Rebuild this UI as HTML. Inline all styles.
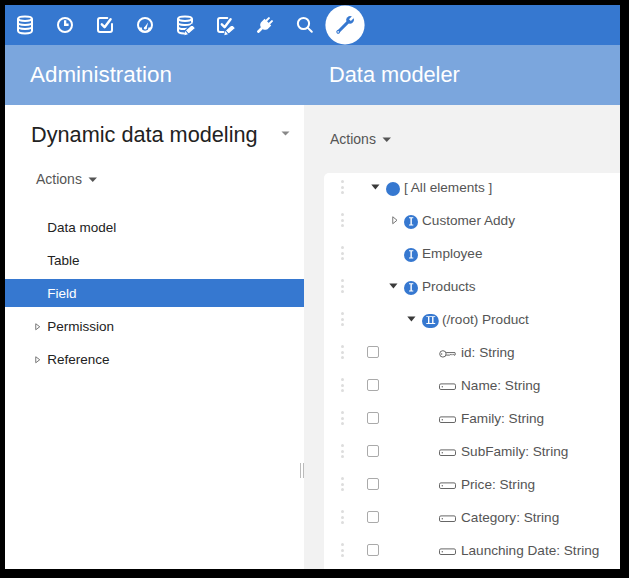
<!DOCTYPE html>
<html><head><meta charset="utf-8">
<style>
html,body{margin:0;padding:0;}
body{width:629px;height:578px;background:#000;position:relative;overflow:hidden;font-family:"Liberation Sans",sans-serif;}
#app{position:absolute;left:5px;top:5px;width:615px;height:564px;background:#fff;overflow:hidden;}
.abs{position:absolute;}
#topbar{position:absolute;left:0;top:0;width:615px;height:40px;background:#3678d0;}
#hdr{position:absolute;left:0;top:40px;width:615px;height:60px;background:#7ba6dd;}
.htxt{position:absolute;color:#fff;font-size:22px;line-height:26px;white-space:nowrap;}
#left{position:absolute;left:0;top:100px;width:299px;height:464px;background:#fff;}
#right{position:absolute;left:299px;top:100px;width:316px;height:464px;background:#f2f2f2;}
#card{position:absolute;left:20px;top:68px;width:320px;height:420px;background:#fff;border-radius:5px;}
.t{position:absolute;white-space:nowrap;font-size:14px;line-height:20px;}
.lt{color:#222;font-size:13.5px;}
.tt{color:#555;font-size:13.6px;}
.dots{position:absolute;width:3px;height:13px;}
.dots i{position:absolute;left:0;width:3px;height:3px;border-radius:50%;background:#ddd;}
.cb{position:absolute;width:10px;height:10px;border:1px solid #aaa;border-radius:2px;background:#fff;}
</style></head>
<body>
<div id="app">
  <div id="topbar">
    <svg class="abs" style="left:0;top:0" width="615" height="40" viewBox="5 5 615 40">
      <g fill="none" stroke="#fff" stroke-width="2" stroke-linecap="round" stroke-linejoin="round">
        <!-- database -->
        <path d="M18,18.8 C18,15.6 32,15.6 32,18.8 V30.8 C32,34.4 18,34.4 18,30.8 Z"/>
        <path d="M18.5,19 C19,21.6 31,21.6 31.5,19"/>
        <path d="M18,22.8 C18,25.6 32,25.6 32,22.8"/>
        <path d="M18,26.8 C18,29.6 32,29.6 32,26.8"/>
        <!-- clock -->
        <circle cx="65" cy="25" r="7"/>
        <!-- checkbox -->
        <path d="M107.3,18 H100 Q98,18 98,20 V30 Q98,32 100,32 H110 Q112,32 112,30 V24"/>
        <path d="M101.8,24.3 L104.6,27.2 L110.6,19.2" stroke-width="2.4"/>
        <!-- gauge -->
        <circle cx="145" cy="25" r="7"/>
        <!-- db edit -->
        <path d="M184,33.5 C180,33.5 178,32.5 178,30.8 V18.8 C178,15.6 192,15.6 192,18.8 V22"/>
        <path d="M178.5,19 C179,21.6 191,21.6 191.5,19"/>
        <path d="M178,22.8 C178,25.6 190,25.6 191.5,23.5"/>
        <path d="M178,26.8 C178,29.2 184,29.4 187,28.8"/>
        <!-- check edit -->
        <path d="M227.3,18 H220 Q218,18 218,20 V30 Q218,32 220,32 H223.5"/>
        <path d="M221.8,24.3 L224.6,27.2 L230.6,19.2" stroke-width="2.4"/>
        <!-- search -->
        <circle cx="303.5" cy="23.5" r="5.6"/>
        <path d="M307.6,27.6 L311.8,31.8"/>
      </g>
      <g fill="#fff">
        <path d="M64,20.3 h2.3 v3.3 h2.3 v2.3 h-4.6 z"/>
        <!-- gauge bottom -->
        <path d="M138.3,27.4 H141.8 A3.3,3.3 0 0 0 148.4,27.4 H151.7 A7,7 0 0 1 138.3,27.4 Z"/>
        <path d="M144.1,27.8 L148.1,22.6 L146.5,28.7 Z"/>
        <circle cx="145.3" cy="28.2" r="1.35"/>
      </g>
      <!-- pencils -->
      <g fill="#fff" stroke="#3678d0" stroke-width="1.2" stroke-linejoin="round">
        <path d="M192.1,24.3 L195.6,28.2 L188.7,34.3 L185.2,30.4 Z"/>
        <path d="M232.1,24.3 L235.6,28.2 L228.7,34.3 L225.2,30.4 Z"/>
      </g>
      <g fill="#fff">
        <path d="M185.2,31.1 L188.0,34.2 L184.3,35.3 Z"/>
        <path d="M225.2,31.1 L228.0,34.2 L224.3,35.3 Z"/>
      </g>
      <!-- plug -->
      <g fill="#fff" transform="translate(265.5,24.5) rotate(45)">
        <path d="M-4.7,-3.4 H4.7 V0.8 C4.7,3.8 2.5,5.3 0,5.3 C-2.5,5.3 -4.7,3.8 -4.7,0.8 Z"/>
        <rect x="-3.1" y="-7.9" width="1.9" height="5" rx="0.6"/>
        <rect x="1.2" y="-7.9" width="1.9" height="5" rx="0.6"/>
        <rect x="-1.3" y="4" width="2.6" height="7.3" rx="1"/>
      </g>
      <circle cx="345" cy="25" r="19.6" fill="#fff"/>
      <g transform="translate(344,26) rotate(45)">
        <rect x="-1.5" y="-7" width="3" height="15.5" rx="1.5" fill="#3678d0"/>
        <circle cx="0" cy="8.2" r="1.9" fill="#3678d0"/>
        <circle cx="0" cy="8.3" r="0.75" fill="#fff"/>
        <circle cx="0" cy="-8.6" r="3.7" fill="#3678d0"/>
        <rect x="-1.3" y="-13" width="2.6" height="4.6" fill="#fff"/>
      </g>
    </svg>
  </div>
  <div id="hdr">
    <div class="htxt" style="left:25px;top:16.8px;font-size:22.4px;">Administration</div>
    <div class="htxt" style="left:324px;top:16.8px;font-size:21.8px;">Data modeler</div>
  </div>
  <div id="left">
    <div class="t" style="left:26px;top:17px;font-size:21.7px;line-height:26px;color:#222;">Dynamic data modeling</div>
    <svg class="abs" style="left:276px;top:25.8px" width="10" height="6"><path d="M0.5,0.5 H8.5 L4.5,4.5 Z" fill="#888"/></svg>
    <div class="t" style="left:31px;top:64px;color:#555;">Actions</div>
    <svg class="abs" style="left:83px;top:72px" width="10" height="6"><path d="M0.5,0.5 H9 L4.75,5 Z" fill="#555"/></svg>
    <div class="t lt" style="left:42.3px;top:112.5px;">Data model</div>
    <div class="t lt" style="left:42.3px;top:145.5px;">Table</div>
    <div class="abs" style="left:0;top:174px;width:299px;height:28px;background:#3678d0;"></div>
    <div class="t" style="left:42.3px;top:178.5px;color:#fff;font-size:13.5px;">Field</div>
    <svg class="abs" style="left:30px;top:218px" width="6" height="8"><path d="M0.75,0.75 L4.75,3.75 L0.75,6.75 Z" fill="none" stroke="#777" stroke-width="1"/></svg>
    <div class="t lt" style="left:42.3px;top:211.5px;">Permission</div>
    <svg class="abs" style="left:30px;top:251px" width="6" height="8"><path d="M0.75,0.75 L4.75,3.75 L0.75,6.75 Z" fill="none" stroke="#777" stroke-width="1"/></svg>
    <div class="t lt" style="left:42.3px;top:244.5px;">Reference</div>
    <div class="abs" style="left:295px;top:358px;width:1px;height:15px;background:#bbb;"></div>
    <div class="abs" style="left:298px;top:358px;width:1px;height:15px;background:#bbb;"></div>
  </div>
  <div id="right">
    <div class="t" style="left:26px;top:24px;color:#555;">Actions</div>
    <svg class="abs" style="left:78px;top:32px" width="10" height="6"><path d="M0.5,0.5 H9 L4.75,5 Z" fill="#555"/></svg>
    <div id="card">
<div class="dots" style="left:16.5px;top:7px"><i style="top:0"></i><i style="top:5.5px"></i><i style="top:10.5px"></i></div>
<div class="dots" style="left:16.5px;top:40px"><i style="top:0"></i><i style="top:5.5px"></i><i style="top:10.5px"></i></div>
<div class="dots" style="left:16.5px;top:73px"><i style="top:0"></i><i style="top:5.5px"></i><i style="top:10.5px"></i></div>
<div class="dots" style="left:16.5px;top:106px"><i style="top:0"></i><i style="top:5.5px"></i><i style="top:10.5px"></i></div>
<div class="dots" style="left:16.5px;top:139px"><i style="top:0"></i><i style="top:5.5px"></i><i style="top:10.5px"></i></div>
<div class="dots" style="left:16.5px;top:172px"><i style="top:0"></i><i style="top:5.5px"></i><i style="top:10.5px"></i></div>
<div class="dots" style="left:16.5px;top:205px"><i style="top:0"></i><i style="top:5.5px"></i><i style="top:10.5px"></i></div>
<div class="dots" style="left:16.5px;top:238px"><i style="top:0"></i><i style="top:5.5px"></i><i style="top:10.5px"></i></div>
<div class="dots" style="left:16.5px;top:271px"><i style="top:0"></i><i style="top:5.5px"></i><i style="top:10.5px"></i></div>
<div class="dots" style="left:16.5px;top:304px"><i style="top:0"></i><i style="top:5.5px"></i><i style="top:10.5px"></i></div>
<div class="dots" style="left:16.5px;top:337px"><i style="top:0"></i><i style="top:5.5px"></i><i style="top:10.5px"></i></div>
<div class="dots" style="left:16.5px;top:370px"><i style="top:0"></i><i style="top:5.5px"></i><i style="top:10.5px"></i></div>
<svg class="abs" style="left:47px;top:11.2px" width="10" height="7"><path d="M0.3,0.5 H8.5 L4.4,5.6 Z" fill="#3a3a3a"/></svg>
<div class="abs" style="left:62px;top:9px;width:14px;height:14px;border-radius:50%;background:#3678d0"></div>
<div class="t tt" style="left:80px;top:4.7px">[ All elements ]</div>
<svg class="abs" style="left:68px;top:42.8px" width="7" height="10"><path d="M0.75,0.75 L5,4.25 L0.75,7.75 Z" fill="none" stroke="#777" stroke-width="1"/></svg>
<svg class="abs" style="left:80px;top:42px" width="14" height="14"><circle cx="7" cy="7" r="7" fill="#3678d0"/><path d="M5,2.3 H9.3 V3.2 H7.85 V9.6 H9.3 V10.5 H5 V9.6 H6.45 V3.2 H5 Z" fill="#fff"/></svg>
<div class="t tt" style="left:98px;top:37.7px">Customer Addy</div>
<svg class="abs" style="left:80px;top:75px" width="14" height="14"><circle cx="7" cy="7" r="7" fill="#3678d0"/><path d="M5,2.3 H9.3 V3.2 H7.85 V9.6 H9.3 V10.5 H5 V9.6 H6.45 V3.2 H5 Z" fill="#fff"/></svg>
<div class="t tt" style="left:98px;top:70.7px">Employee</div>
<svg class="abs" style="left:64.7px;top:110.2px" width="10" height="7"><path d="M0.3,0.5 H8.5 L4.4,5.6 Z" fill="#3a3a3a"/></svg>
<svg class="abs" style="left:80px;top:108px" width="14" height="14"><circle cx="7" cy="7" r="7" fill="#3678d0"/><path d="M5,2.3 H9.3 V3.2 H7.85 V9.6 H9.3 V10.5 H5 V9.6 H6.45 V3.2 H5 Z" fill="#fff"/></svg>
<div class="t tt" style="left:98px;top:103.7px">Products</div>
<svg class="abs" style="left:82.7px;top:143.2px" width="10" height="7"><path d="M0.3,0.5 H8.5 L4.4,5.6 Z" fill="#3a3a3a"/></svg>
<svg class="abs" style="left:98px;top:140.8px" width="17" height="15"><rect x="0" y="0" width="16.8" height="14" rx="7" fill="#3678d0"/><path d="M4.3,2.2 H13.2 V3.1 H11.5 V9.1 H13.2 V10 H4.3 V9.1 H6 V3.1 H4.3 Z M7.4,3.1 V9.1 H10.1 V3.1 Z" fill="#fff"/></svg>
<div class="t tt" style="left:118px;top:136.7px">(/root) Product</div>
<div class="cb" style="left:43px;top:173px"></div>
<svg class="abs" style="left:115px;top:177px" width="18" height="9"><g fill="none" stroke="#666" stroke-width="1"><circle cx="3.9" cy="3.9" r="3.2"/><path d="M7.1,2.6 H16 Q16.6,3.8 16,5.1 H15 L14.3,4.4 L13.6,5.1 L12.9,4.4 L12.2,5.1 L11.5,4.4 L10.8,5.1 H7.1"/></g><circle cx="2.6" cy="3.9" r="0.75" fill="#666"/></svg>
<div class="t tt" style="left:137px;top:169.7px">id: String</div>
<div class="cb" style="left:43px;top:206px"></div>
<svg class="abs" style="left:115px;top:210.0px" width="18" height="8"><rect x="0.5" y="0.9" width="16" height="5.6" rx="1.4" fill="none" stroke="#666" stroke-width="1"/><circle cx="3.3" cy="3.7" r="0.7" fill="#666"/></svg>
<div class="t tt" style="left:137px;top:202.7px">Name: String</div>
<div class="cb" style="left:43px;top:239px"></div>
<svg class="abs" style="left:115px;top:243.0px" width="18" height="8"><rect x="0.5" y="0.9" width="16" height="5.6" rx="1.4" fill="none" stroke="#666" stroke-width="1"/><circle cx="3.3" cy="3.7" r="0.7" fill="#666"/></svg>
<div class="t tt" style="left:137px;top:235.7px">Family: String</div>
<div class="cb" style="left:43px;top:272px"></div>
<svg class="abs" style="left:115px;top:276.0px" width="18" height="8"><rect x="0.5" y="0.9" width="16" height="5.6" rx="1.4" fill="none" stroke="#666" stroke-width="1"/><circle cx="3.3" cy="3.7" r="0.7" fill="#666"/></svg>
<div class="t tt" style="left:137px;top:268.7px">SubFamily: String</div>
<div class="cb" style="left:43px;top:305px"></div>
<svg class="abs" style="left:115px;top:309.0px" width="18" height="8"><rect x="0.5" y="0.9" width="16" height="5.6" rx="1.4" fill="none" stroke="#666" stroke-width="1"/><circle cx="3.3" cy="3.7" r="0.7" fill="#666"/></svg>
<div class="t tt" style="left:137px;top:301.7px">Price: String</div>
<div class="cb" style="left:43px;top:338px"></div>
<svg class="abs" style="left:115px;top:342.0px" width="18" height="8"><rect x="0.5" y="0.9" width="16" height="5.6" rx="1.4" fill="none" stroke="#666" stroke-width="1"/><circle cx="3.3" cy="3.7" r="0.7" fill="#666"/></svg>
<div class="t tt" style="left:137px;top:334.7px">Category: String</div>
<div class="cb" style="left:43px;top:371px"></div>
<svg class="abs" style="left:115px;top:375.0px" width="18" height="8"><rect x="0.5" y="0.9" width="16" height="5.6" rx="1.4" fill="none" stroke="#666" stroke-width="1"/><circle cx="3.3" cy="3.7" r="0.7" fill="#666"/></svg>
<div class="t tt" style="left:137px;top:367.7px">Launching Date: String</div>
</div>
  </div>
</div>
</body></html>
